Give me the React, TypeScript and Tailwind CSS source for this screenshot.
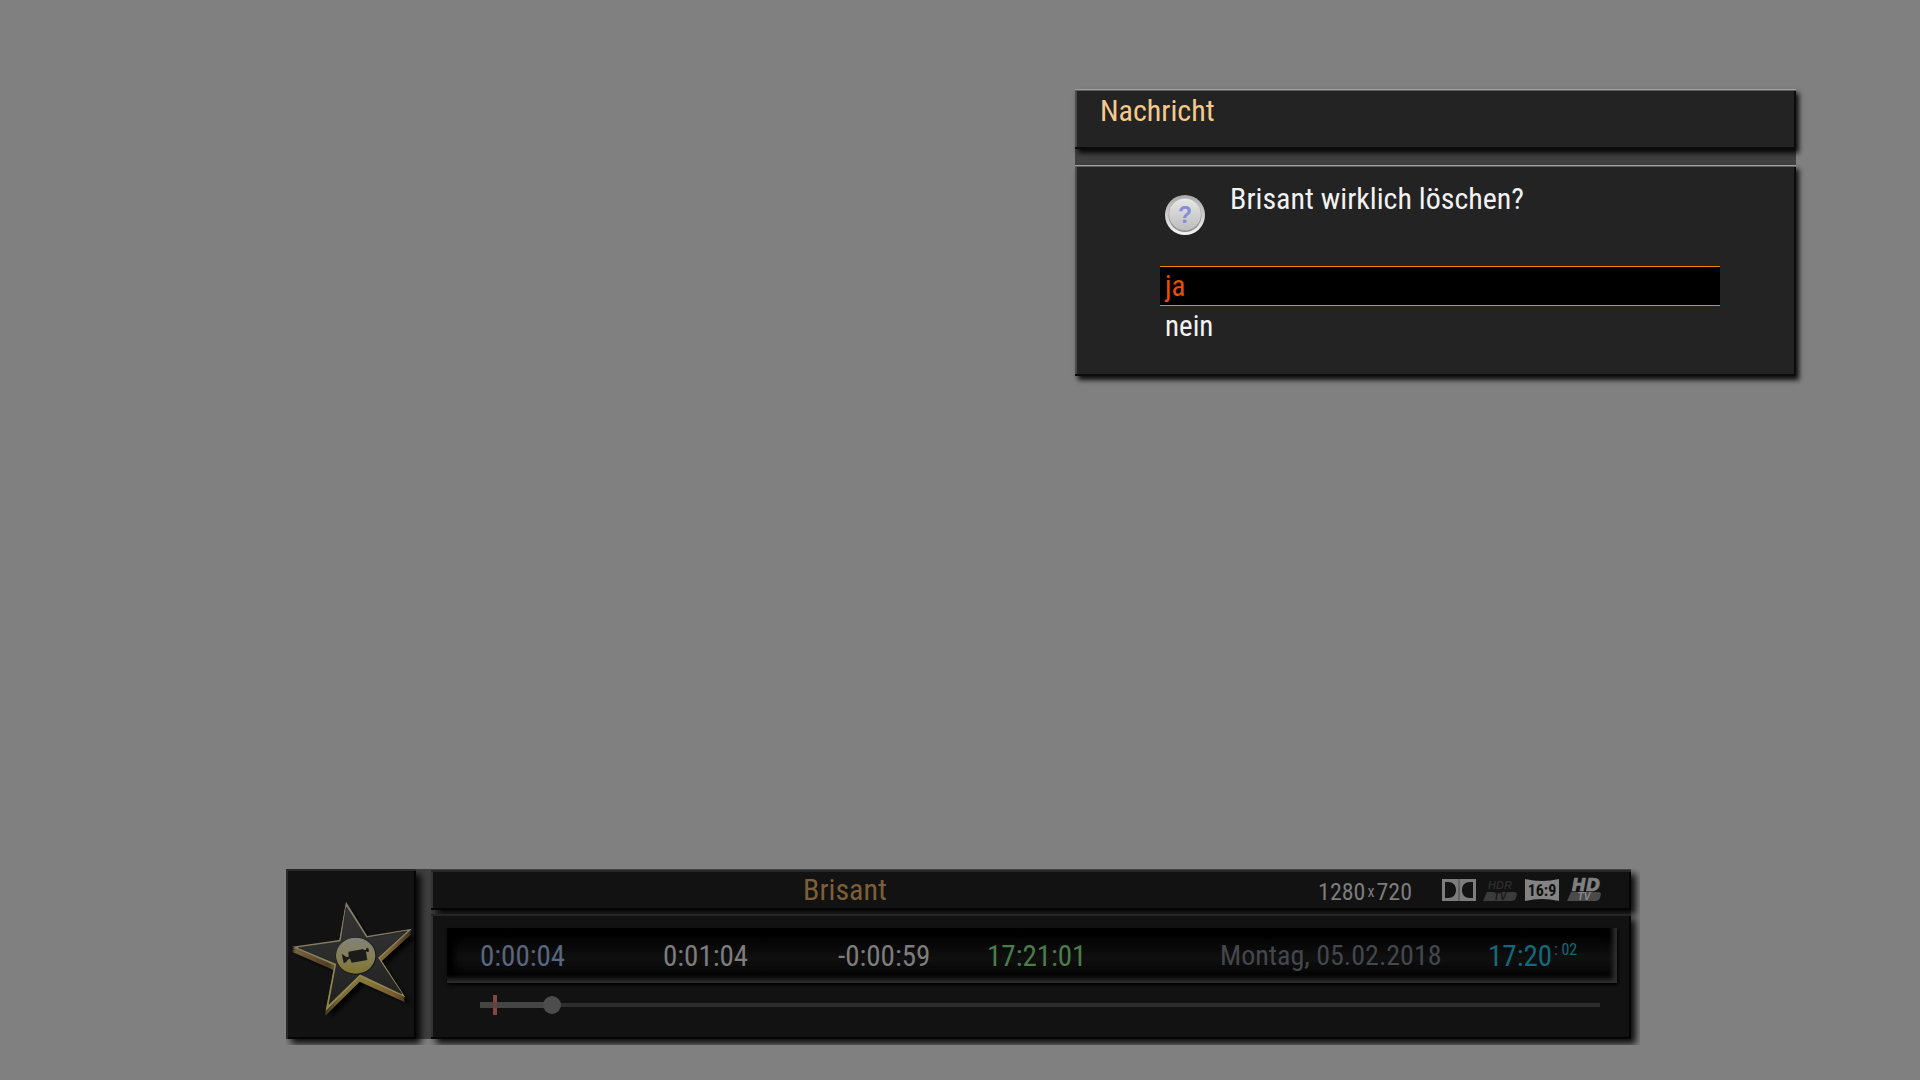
const times = [
    { label: "Position", value: "0:00:04", color: "text-[#5a6680]" },
    { label: "Gesamt", value: "0:01:04", color: "text-[#7d7d7d]" },
    { label: "Rest", value: "-0:00:59", color: "text-[#7d7d7d]" },
    { label: "Ende", value: "17:21:01", color: "text-[#4a7d4a]" },
]

const star = "198,125 262,228 396,206 300,294 376,412 240,350 137,452 163,316 37,260 178,240"

const QuestionIcon = () => (
    <svg className="size-10 shrink-0" viewBox="0 0 40 40">
        <defs>
            <linearGradient id="ring" x1="0" y1="0" x2="0" y2="1">
                <stop offset="0" stopColor="#a8a8a8"/>
                <stop offset="1" stopColor="#f4f4f4"/>
            </linearGradient>
            <linearGradient id="face" x1="0" y1="0" x2="0" y2="1">
                <stop offset="0" stopColor="#e6e6e6"/>
                <stop offset="1" stopColor="#bdbdbd"/>
            </linearGradient>
        </defs>
        <circle cx="20" cy="20" r="20" fill="url(#ring)"/>
        <circle cx="20" cy="20.500" r="16.500" fill="#8e8e8e"/>
        <circle cx="20" cy="19.500" r="16" fill="url(#face)"/>
        <text x="20" y="28" textAnchor="middle" fontFamily="Liberation Sans, sans-serif" fontWeight="700" fontSize="23" fill="#868cd8">?</text>
    </svg>
)

const Star = () => (
    <svg className="h-[170px] w-[130px]" viewBox="18 27 390 510">
        <defs>
            <linearGradient id="gold" x1="0" y1="0" x2="0" y2="1">
                <stop offset="0" stopColor="#77776c"/>
                <stop offset=".35" stopColor="#848066"/>
                <stop offset=".7" stopColor="#8f8650"/>
                <stop offset="1" stopColor="#958a55"/>
            </linearGradient>
            <linearGradient id="side" x1="0" y1="0" x2="1" y2="0">
                <stop offset="0" stopColor="#7c6643"/>
                <stop offset=".3" stopColor="#4f3f22"/>
                <stop offset=".4" stopColor="#7a6a35"/>
                <stop offset=".62" stopColor="#857a3a"/>
                <stop offset=".85" stopColor="#79592f"/>
                <stop offset="1" stopColor="#3b3220"/>
            </linearGradient>
            <linearGradient id="stone" x1="0" y1="0" x2="0" y2="1">
                <stop offset="0" stopColor="#333333"/>
                <stop offset=".5" stopColor="#2c2c2c"/>
                <stop offset="1" stopColor="#202020"/>
            </linearGradient>
            <linearGradient id="disc" x1="0" y1="0" x2="0" y2="1">
                <stop offset="0" stopColor="#83827a"/>
                <stop offset=".5" stopColor="#857f57"/>
                <stop offset="1" stopColor="#80742f"/>
            </linearGradient>
            <filter id="soft" x="-20%" y="-20%" width="140%" height="140%">
                <feGaussianBlur stdDeviation="7"/>
            </filter>
        </defs>
        <polygon points={star} fill="#000" filter="url(#soft)" transform="translate(14 22)"/>
        <g fill="url(#side)">
            <polygon points={star} transform="translate(-1 15)"/>
            <polygon points={star} transform="translate(-1 10)"/>
            <polygon points={star} transform="translate(0 5)"/>
        </g>
        <polygon points={star} fill="url(#gold)"/>
        <polygon points="199,141 259,234 381,213 293,293 366,402 240,342 147,433 170,311 55,263 183,245" fill="url(#stone)" stroke="#191919" strokeWidth="2"/>
        <ellipse cx="228" cy="288" rx="61" ry="56" fill="#15151a"/>
        <ellipse cx="227" cy="287" rx="59" ry="54" fill="url(#disc)"/>
        <path fill="#1b1b1b" d="M185 281l14 10 7-1-1-15 45-8 1 3 8-1-1-4 7-1 2 11-6 1-1-2-2 1 4 25-47 8-5-12-4 1-10 11-5 1z"/>
    </svg>
)

const Dolby = () => (
    <svg className="h-[22px] w-[34px]" viewBox="0 0 34 22">
        <path fill="#7d7d7d" d="M0 0h34v22H0z"/>
        <path fill="#131313" d="M3 3h3c5 0 8 3 8 8s-3 8-8 8H3zM31 3h-3c-5 0-8 3-8 8s3 8 8 8h3z"/>
        <path stroke="#4b4b4b" d="M17 0v22"/>
    </svg>
)

const HdrTv = () => (
    <svg className="h-[22px] w-[35px] overflow-visible" viewBox="0 0 35 22" fontFamily="Liberation Sans, sans-serif" fontWeight="700" fontStyle="italic">
        <text x="17" y="10" textAnchor="middle" fontSize="11" fill="#2b2b2b">HDR</text>
        <path fill="#3b3b3b" d="M4 13h27q4 0 2.500 4l-1 3q-1 2-4 2H0z"/>
        <text x="17" y="21" textAnchor="middle" fontSize="10" fill="#191919">TV</text>
    </svg>
)

const HdTv = () => (
    <svg className="h-[22px] w-[35px] overflow-visible" viewBox="0 0 35 22" fontWeight="700" fontStyle="italic">
        <text x="20" y="12" textAnchor="middle" fontFamily="DejaVu Sans, sans-serif" fontSize="17" fill="#808080" stroke="#808080" strokeWidth=".6">HD</text>
        <path fill="#4a4a4a" d="M5 13h27q4 0 2.500 4l-1 3q-1 2-4 2H1z"/>
        <text x="18" y="21" textAnchor="middle" fontFamily="Liberation Sans, sans-serif" fontSize="10" fill="#8a8a8a">TV</text>
    </svg>
)

const Wide = () => (
    <svg className="h-[22px] w-[34px]" viewBox="0 0 34 22">
        <path fill="#838383" d="M0 0q17 4 34 0v22q-17-4-34 0z"/>
        <text x="17" y="17" textAnchor="middle" fontFamily="Roboto Condensed, sans-serif" fontWeight="700" fontSize="16" fill="#101010">16:9</text>
    </svg>
)

const Dialog = () => (
    <section role="dialog" aria-labelledby="dialog-title" className="mr-[124px] w-[721px] self-end bg-[#404040] text-[#f2f2f2]">
        <header className="h-[60px] bg-[#232323] px-[25px] pt-1 shadow-[inset_0_1px_#a0a0a0,inset_0_2px_#5c5c5c,inset_-2px_-2px_#0b0b0b,inset_2px_0_#4c4c4c,3px_4px_5px_rgba(0,0,0,0.9)]">
            <h1 id="dialog-title" className="text-[30px] leading-9 text-[#f5c98b]">Nachricht</h1>
        </header>
        <div className="mt-4 h-[211px] bg-[#232323] pl-[85px] pr-[76px] pt-4 shadow-[inset_0_1px_#a0a0a0,inset_0_2px_#5c5c5c,inset_-2px_-2px_#0b0b0b,inset_2px_0_#4c4c4c,3px_4px_5px_rgba(0,0,0,0.9)]">
            <div className="flex h-[85px] gap-[25px] pl-[5px]">
                <div className="pt-[14px]"><QuestionIcon/></div>
                <p className="text-[30px] leading-9">Brisant wirklich löschen?</p>
            </div>
            <button className="block h-10 w-full border-y border-[#ff8000] bg-black px-[5px] text-left text-[29px] leading-9 text-[#e85000]">ja</button>
            <button className="block h-10 w-full px-[5px] text-left text-[29px] leading-10">nein</button>
        </div>
    </section>
)

const Progress = () => (
    <div className="relative ml-[33px] mr-[17px] mt-3 flex h-5 items-center">
        <div className="h-1 w-full bg-[#2d2d2d]"/>
        <div className="absolute left-0 h-[6px] w-[6%] bg-[#454545]"/>
        <div className="absolute left-[13px] h-5 w-1 bg-[#8a4343]"/>
        <div className="absolute left-[13px] h-[6px] w-1 bg-[#6b4040]"/>
        <input
            type="range"
            aria-label="Wiedergabeposition"
            max={1000}
            defaultValue={57}
            className="absolute inset-0 m-0 w-full appearance-none bg-transparent [&::-webkit-slider-thumb]:size-[18px] [&::-webkit-slider-thumb]:appearance-none [&::-webkit-slider-thumb]:rounded-full [&::-webkit-slider-thumb]:bg-[#4d4d4d]"
        />
    </div>
)

const ReplayBar = () => (
    <section className="ml-[286px] mr-[280px] overflow-hidden pb-[6px] pr-[9px]">
        <div className="flex gap-[15px] bg-[#404040]">
            <div className="h-[170px] w-[130px] shrink-0 bg-[#121212] shadow-[inset_2px_2px_#292929,inset_-2px_-2px_#050505,5px_5px_7px_rgba(0,0,0,0.9)]">
                <Star/>
            </div>
            <div className="flex min-w-0 flex-1 flex-col gap-1">
                <header className="flex h-[41px] items-center bg-[#121212] pl-[372px] pr-[30px] shadow-[inset_0_1px_#444444,inset_0_3px_#262626,inset_-2px_-2px_#050505,inset_2px_0_#333333,5px_5px_7px_rgba(0,0,0,0.9)]">
                    <h2 className="text-[30px] leading-9 text-[#7d5f38]">Brisant</h2>
                    <p className="ml-auto pt-1 text-[24px] leading-10 text-[#7d7d7d]">1280<span className="px-0.5 align-[3px] text-[16px] leading-4">x</span>720</p>
                    <div className="ml-[30px] flex gap-[7px]">
                        <Dolby/>
                        <HdrTv/>
                        <Wide/>
                        <HdTv/>
                    </div>
                </header>
                <div className="h-[125px] bg-[#121212] pl-4 pr-[14px] pt-[14px] shadow-[inset_0_2px_#262626,inset_-2px_-2px_#050505,inset_2px_0_#333333,5px_5px_7px_rgba(0,0,0,0.9)]">
                    <div className="grid h-[55px] grid-cols-[183fr_175fr_149fr_233fr_268fr_129fr] items-center bg-[linear-gradient(180deg,#000_10%,#101010_55%,#030303_88%)] pl-[33px] pt-px text-[29px] leading-9 shadow-[inset_-4px_-4px_5px_#303030,inset_8px_2px_6px_#000,1px_2px_3px_#000]">
                        {times.map((t) => (
                            <time key={t.label} aria-label={t.label} className={t.color}>{t.value}</time>
                        ))}
                        <time className="whitespace-nowrap text-[28px] text-[#44474d]">Montag, 05.02.2018</time>
                        <time className="flex items-start gap-0.5 text-[#12697c]">
                            17:20<span className="text-[16px] leading-6">: 02</span>
                        </time>
                    </div>
                    <Progress/>
                </div>
            </div>
        </div>
    </section>
)

const App = () => {
    return (
        <main className="flex min-h-screen flex-col justify-between bg-[#808080] pb-[35px] pt-[89px] font-['Roboto_Condensed',Roboto,sans-serif]">
            <Dialog/>
            <ReplayBar/>
        </main>
    )
}

export default App
